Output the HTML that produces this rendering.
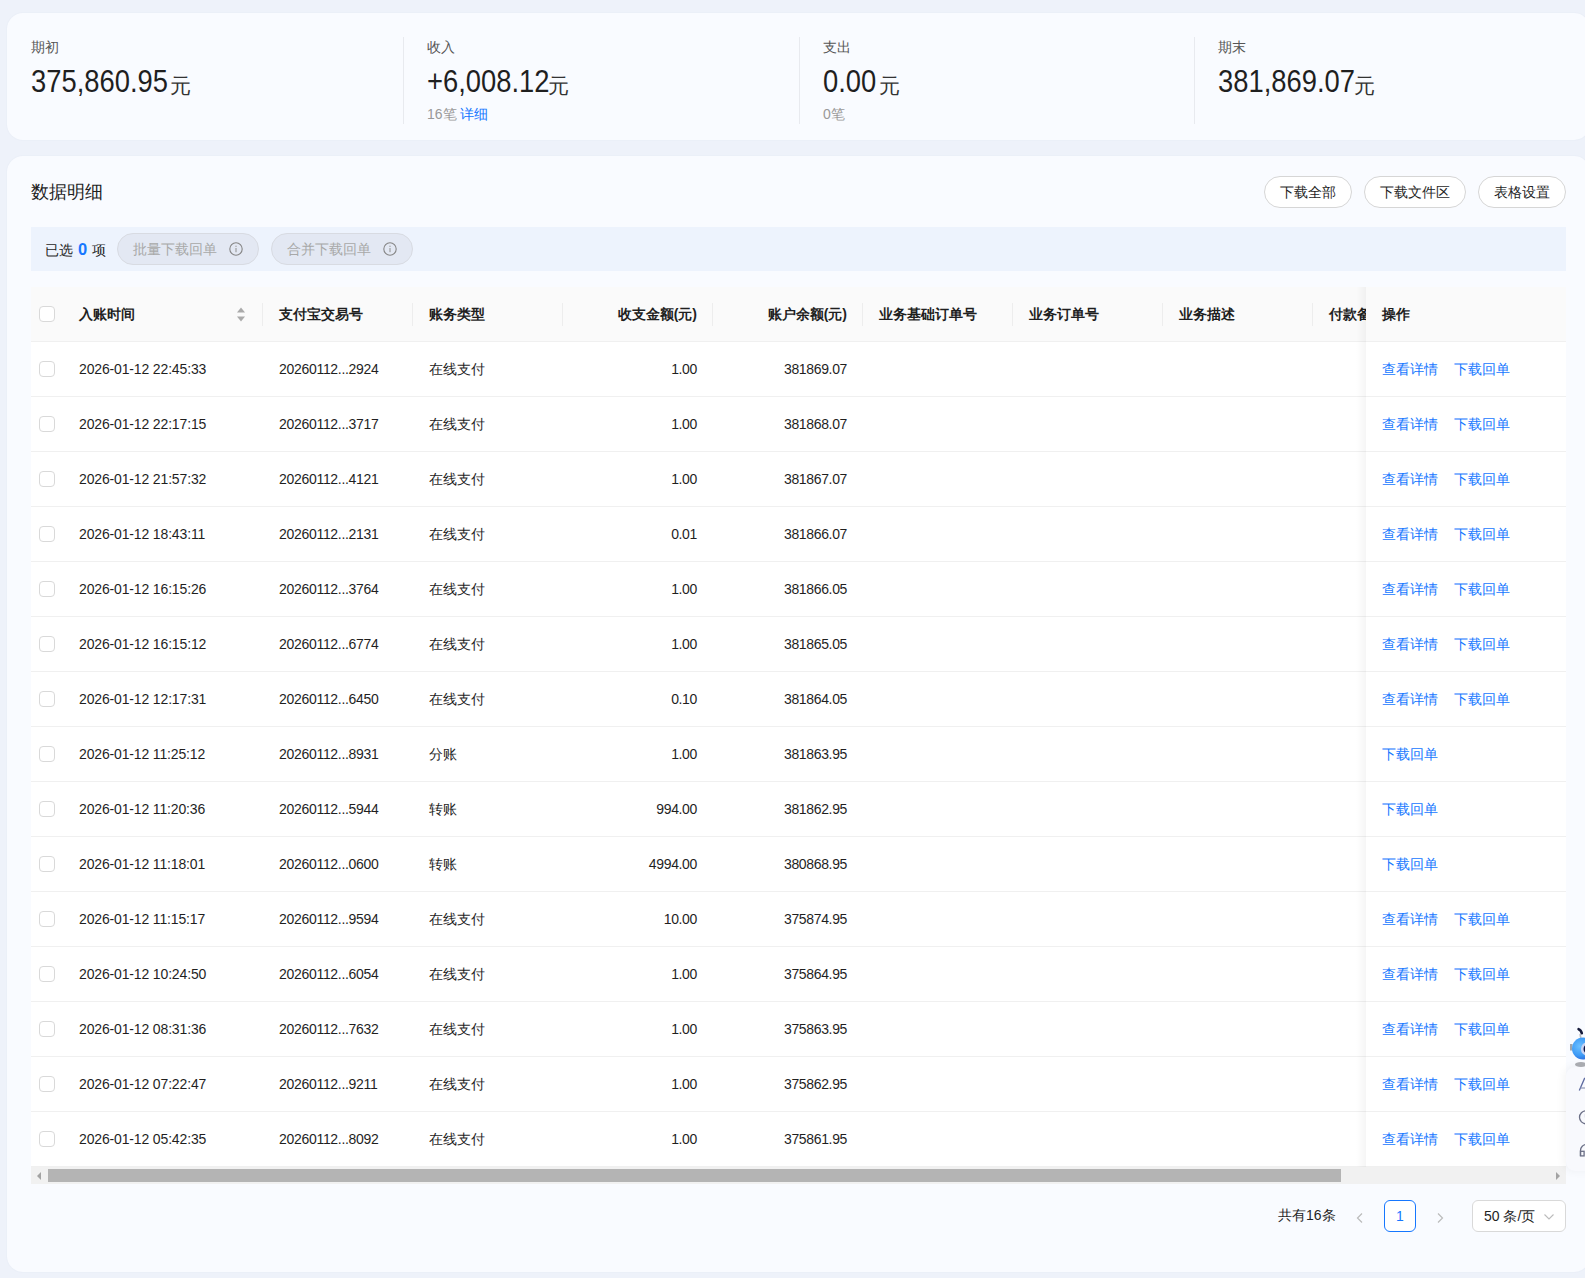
<!DOCTYPE html><html><head><meta charset="utf-8"><style>*{margin:0;padding:0;box-sizing:border-box}
html,body{width:1585px;height:1278px;overflow:hidden}
body{background:#eef2fa;font-family:"Liberation Sans",sans-serif;color:#1f1f1f;position:relative;font-size:14px}
.card1{position:absolute;left:7px;top:13px;width:1583px;height:127px;background:#f9fbff;border-radius:16px;box-shadow:0 0 2px rgba(60,80,120,0.05)}
.slab{position:absolute;top:38px;font-size:14px;color:#555;white-space:nowrap;line-height:18px}
.snum{position:absolute;top:64px;font-size:31px;color:#1f1f1f;white-space:nowrap;line-height:36px;transform:scaleX(0.883);transform-origin:0 0}
.syuan{position:absolute;top:74px;font-size:21px;color:#333;line-height:24px;white-space:nowrap}
.ssub{position:absolute;top:105px;font-size:14px;white-space:nowrap;line-height:18px}
.g{color:#999}
.lk{color:#1677ff}
.sdiv{position:absolute;top:37px;width:1px;height:87px;background:#e8eaef}
.card2{position:absolute;left:7px;top:156px;width:1583px;height:1116px;background:#f9fbff;border-radius:16px;box-shadow:0 0 2px rgba(60,80,120,0.05)}
.title{position:absolute;left:24px;top:24px;font-size:18px;line-height:24px;color:#1f1f1f}
.btn{position:absolute;top:20px;height:32px;border:1px solid #d6d6d6;border-radius:16px;background:#fff;font-size:14px;line-height:30.5px;text-align:center;color:#1f1f1f}
.selbar{position:absolute;left:24px;top:71px;width:1535px;height:44px;background:#edf3fd}
.seltxt{position:absolute;left:14px;top:13px;font-size:14px;line-height:18px;color:#1f1f1f}
.seltxt b{color:#1677ff;font-weight:bold;font-size:16.5px;margin:0 1px}
.dbtn{position:absolute;top:6px;height:32px;width:142px;border:1px solid #d8dbe2;border-radius:16px;background:#e3e8f3;color:#a8a8a8;font-size:14px;line-height:30px;padding-left:15px;white-space:nowrap}
.dbtn .ii{position:absolute;right:15px;top:8px}
.tbl{position:absolute;left:31px;top:287px;width:1535px;height:897px;background:#fff;overflow:hidden}
.thead{position:absolute;left:0;top:0;width:1535px;height:55px;background:#fafafa;border-bottom:1px solid #f0f0f0}
.th{position:absolute;top:18px;font-size:14px;line-height:18px;font-weight:bold;color:#1f1f1f;white-space:nowrap}
.th.r,.td.r{text-align:right}
.hdiv{position:absolute;top:16px;width:1px;height:23px;background:#ededed}
.sort{position:absolute;left:205px;top:19px}
.tr{position:absolute;left:0;width:1535px;height:55px;border-bottom:1px solid #f0f0f0}
.td{position:absolute;top:18px;font-size:14px;line-height:18px;color:#1f1f1f;white-space:nowrap}
.cb{position:absolute;width:16px;height:16px;border:1px solid #d9d9d9;border-radius:4px;background:#fff}
.fixcol{position:absolute;left:1335px;top:0;width:200px;height:880px;background:#fff}
.fhead{position:absolute;left:0;top:0;width:200px;height:55px;background:#fafafa;border-bottom:1px solid #f0f0f0}
.ftr{position:absolute;left:0;width:200px;height:55px;border-bottom:1px solid #f0f0f0;font-size:14px;line-height:18px}
.ftr .lk{position:absolute;top:18px;white-space:nowrap}
.a1{left:16px}.a2{left:88px}
.fshadow{position:absolute;left:1325px;top:0;width:10px;height:880px;background:linear-gradient(to right,rgba(0,0,0,0),rgba(0,0,0,0.04))}
.sb{position:absolute;left:0;top:880px;width:1535px;height:17px;background:#f1f1f1}
.thumb{position:absolute;left:17px;top:2px;height:13px;width:1293px;background:#b4b4b4}
.arl{position:absolute;left:5px;top:5px}
.arr{position:absolute;right:5px;top:5px}
.pg-total{position:absolute;left:1278px;top:1206px;font-size:14px;line-height:18px;color:#1f1f1f}
.pg-prev{position:absolute;left:1355px;top:1212px}
.pg-cur{position:absolute;left:1384px;top:1200px;width:32px;height:32px;border:1px solid #1677ff;border-radius:6px;color:#1677ff;text-align:center;line-height:30px;font-size:14px;background:#fff}
.pg-next{position:absolute;left:1435px;top:1212px}
.pg-sel{position:absolute;left:1472px;top:1200px;width:94px;height:32px;border:1px solid #d9d9d9;border-radius:6px;background:#fff;font-size:14px;line-height:30px;padding-left:11px;color:#1f1f1f}
.fw{position:absolute;left:1566px;top:1067px;width:40px;height:104px;background:#f8f9fd;border-radius:9px;box-shadow:-2px 0 10px rgba(0,0,0,0.05)}
.mascot{position:absolute;left:1566px;top:1020px}
.fwicons{position:absolute;left:1566px;top:1067px}
.dt{letter-spacing:-0.15px}.tn{letter-spacing:-0.3px}.am{letter-spacing:-0.35px}
</style></head><body>
<div class="card1"></div>
<div class="slab" style="left:31px">期初</div>
<div class="snum" style="left:31px">375,860.95</div>
<div class="syuan" style="left:170px">元</div>
<div class="slab" style="left:427px">收入</div>
<div class="snum" style="left:427px">+6,008.12</div>
<div class="syuan" style="left:548px">元</div>
<div class="ssub" style="left:427px"><span class="g">16笔</span> <span class="lk">详细</span></div>
<div class="sdiv" style="left:403px"></div>
<div class="slab" style="left:823px">支出</div>
<div class="snum" style="left:823px">0.00</div>
<div class="syuan" style="left:879px">元</div>
<div class="ssub" style="left:823px"><span class="g">0笔</span></div>
<div class="sdiv" style="left:799px"></div>
<div class="slab" style="left:1218px">期末</div>
<div class="snum" style="left:1218px">381,869.07</div>
<div class="syuan" style="left:1354px">元</div>
<div class="sdiv" style="left:1194px"></div>
<div class="card2">
<div class="title">数据明细</div>
<div class="btn" style="left:1257px;width:88px">下载全部</div>
<div class="btn" style="left:1357px;width:102px">下载文件区</div>
<div class="btn" style="left:1471px;width:88px">表格设置</div>
<div class="selbar"><span class="seltxt">已选 <b>0</b> 项</span><span class="dbtn" style="left:86px">批量下载回单<svg class="ii" width="14" height="14" viewBox="0 0 14 14"><circle cx="7" cy="7" r="6.2" fill="none" stroke="#858585" stroke-width="1.1"/><rect x="6.45" y="6" width="1.1" height="4.2" fill="#999"/><rect x="6.45" y="3.7" width="1.1" height="1.2" fill="#999"/></svg></span><span class="dbtn" style="left:240px">合并下载回单<svg class="ii" width="14" height="14" viewBox="0 0 14 14"><circle cx="7" cy="7" r="6.2" fill="none" stroke="#858585" stroke-width="1.1"/><rect x="6.45" y="6" width="1.1" height="4.2" fill="#999"/><rect x="6.45" y="3.7" width="1.1" height="1.2" fill="#999"/></svg></span></div>
</div>
<div class="tbl">
<div class="thead">
<span class="cb" style="left:8px;top:19px"></span>
<div class="th" style="left:48px">入账时间</div>
<div class="th" style="left:248px">支付宝交易号</div>
<div class="th" style="left:398px">账务类型</div>
<div class="th r" style="left:532px;width:134px">收支金额(元)</div>
<div class="th r" style="left:682px;width:134px">账户余额(元)</div>
<div class="th" style="left:848px">业务基础订单号</div>
<div class="th" style="left:998px">业务订单号</div>
<div class="th" style="left:1148px">业务描述</div>
<div class="th" style="left:1298px">付款备注</div>
<div class="hdiv" style="left:231px"></div>
<div class="hdiv" style="left:381px"></div>
<div class="hdiv" style="left:531px"></div>
<div class="hdiv" style="left:681px"></div>
<div class="hdiv" style="left:831px"></div>
<div class="hdiv" style="left:981px"></div>
<div class="hdiv" style="left:1131px"></div>
<div class="hdiv" style="left:1281px"></div>
<div class="hdiv" style="left:1431px"></div>
<svg class="sort" width="10" height="16" viewBox="0 0 10 16"><path d="M5 1.5 L9 6.5 L1 6.5Z" fill="#aaa"/><path d="M5 15.5 L9 10.5 L1 10.5Z" fill="#aaa"/></svg>
</div>
<div class="tr" style="top:55px">
<span class="cb" style="left:8px;top:19px"></span>
<div class="td dt" style="left:48px">2026-01-12 22:45:33</div>
<div class="td tn" style="left:248px">20260112...2924</div>
<div class="td " style="left:398px">在线支付</div>
<div class="td r am" style="left:532px;width:134px">1.00</div>
<div class="td r am" style="left:682px;width:134px">381869.07</div>
</div>
<div class="tr" style="top:110px">
<span class="cb" style="left:8px;top:19px"></span>
<div class="td dt" style="left:48px">2026-01-12 22:17:15</div>
<div class="td tn" style="left:248px">20260112...3717</div>
<div class="td " style="left:398px">在线支付</div>
<div class="td r am" style="left:532px;width:134px">1.00</div>
<div class="td r am" style="left:682px;width:134px">381868.07</div>
</div>
<div class="tr" style="top:165px">
<span class="cb" style="left:8px;top:19px"></span>
<div class="td dt" style="left:48px">2026-01-12 21:57:32</div>
<div class="td tn" style="left:248px">20260112...4121</div>
<div class="td " style="left:398px">在线支付</div>
<div class="td r am" style="left:532px;width:134px">1.00</div>
<div class="td r am" style="left:682px;width:134px">381867.07</div>
</div>
<div class="tr" style="top:220px">
<span class="cb" style="left:8px;top:19px"></span>
<div class="td dt" style="left:48px">2026-01-12 18:43:11</div>
<div class="td tn" style="left:248px">20260112...2131</div>
<div class="td " style="left:398px">在线支付</div>
<div class="td r am" style="left:532px;width:134px">0.01</div>
<div class="td r am" style="left:682px;width:134px">381866.07</div>
</div>
<div class="tr" style="top:275px">
<span class="cb" style="left:8px;top:19px"></span>
<div class="td dt" style="left:48px">2026-01-12 16:15:26</div>
<div class="td tn" style="left:248px">20260112...3764</div>
<div class="td " style="left:398px">在线支付</div>
<div class="td r am" style="left:532px;width:134px">1.00</div>
<div class="td r am" style="left:682px;width:134px">381866.05</div>
</div>
<div class="tr" style="top:330px">
<span class="cb" style="left:8px;top:19px"></span>
<div class="td dt" style="left:48px">2026-01-12 16:15:12</div>
<div class="td tn" style="left:248px">20260112...6774</div>
<div class="td " style="left:398px">在线支付</div>
<div class="td r am" style="left:532px;width:134px">1.00</div>
<div class="td r am" style="left:682px;width:134px">381865.05</div>
</div>
<div class="tr" style="top:385px">
<span class="cb" style="left:8px;top:19px"></span>
<div class="td dt" style="left:48px">2026-01-12 12:17:31</div>
<div class="td tn" style="left:248px">20260112...6450</div>
<div class="td " style="left:398px">在线支付</div>
<div class="td r am" style="left:532px;width:134px">0.10</div>
<div class="td r am" style="left:682px;width:134px">381864.05</div>
</div>
<div class="tr" style="top:440px">
<span class="cb" style="left:8px;top:19px"></span>
<div class="td dt" style="left:48px">2026-01-12 11:25:12</div>
<div class="td tn" style="left:248px">20260112...8931</div>
<div class="td " style="left:398px">分账</div>
<div class="td r am" style="left:532px;width:134px">1.00</div>
<div class="td r am" style="left:682px;width:134px">381863.95</div>
</div>
<div class="tr" style="top:495px">
<span class="cb" style="left:8px;top:19px"></span>
<div class="td dt" style="left:48px">2026-01-12 11:20:36</div>
<div class="td tn" style="left:248px">20260112...5944</div>
<div class="td " style="left:398px">转账</div>
<div class="td r am" style="left:532px;width:134px">994.00</div>
<div class="td r am" style="left:682px;width:134px">381862.95</div>
</div>
<div class="tr" style="top:550px">
<span class="cb" style="left:8px;top:19px"></span>
<div class="td dt" style="left:48px">2026-01-12 11:18:01</div>
<div class="td tn" style="left:248px">20260112...0600</div>
<div class="td " style="left:398px">转账</div>
<div class="td r am" style="left:532px;width:134px">4994.00</div>
<div class="td r am" style="left:682px;width:134px">380868.95</div>
</div>
<div class="tr" style="top:605px">
<span class="cb" style="left:8px;top:19px"></span>
<div class="td dt" style="left:48px">2026-01-12 11:15:17</div>
<div class="td tn" style="left:248px">20260112...9594</div>
<div class="td " style="left:398px">在线支付</div>
<div class="td r am" style="left:532px;width:134px">10.00</div>
<div class="td r am" style="left:682px;width:134px">375874.95</div>
</div>
<div class="tr" style="top:660px">
<span class="cb" style="left:8px;top:19px"></span>
<div class="td dt" style="left:48px">2026-01-12 10:24:50</div>
<div class="td tn" style="left:248px">20260112...6054</div>
<div class="td " style="left:398px">在线支付</div>
<div class="td r am" style="left:532px;width:134px">1.00</div>
<div class="td r am" style="left:682px;width:134px">375864.95</div>
</div>
<div class="tr" style="top:715px">
<span class="cb" style="left:8px;top:19px"></span>
<div class="td dt" style="left:48px">2026-01-12 08:31:36</div>
<div class="td tn" style="left:248px">20260112...7632</div>
<div class="td " style="left:398px">在线支付</div>
<div class="td r am" style="left:532px;width:134px">1.00</div>
<div class="td r am" style="left:682px;width:134px">375863.95</div>
</div>
<div class="tr" style="top:770px">
<span class="cb" style="left:8px;top:19px"></span>
<div class="td dt" style="left:48px">2026-01-12 07:22:47</div>
<div class="td tn" style="left:248px">20260112...9211</div>
<div class="td " style="left:398px">在线支付</div>
<div class="td r am" style="left:532px;width:134px">1.00</div>
<div class="td r am" style="left:682px;width:134px">375862.95</div>
</div>
<div class="tr" style="top:825px">
<span class="cb" style="left:8px;top:19px"></span>
<div class="td dt" style="left:48px">2026-01-12 05:42:35</div>
<div class="td tn" style="left:248px">20260112...8092</div>
<div class="td " style="left:398px">在线支付</div>
<div class="td r am" style="left:532px;width:134px">1.00</div>
<div class="td r am" style="left:682px;width:134px">375861.95</div>
</div>
<div class="fixcol">
<div class="fhead"><span class="th" style="left:16px">操作</span></div>
<div class="ftr" style="top:55px"><span class="lk a1">查看详情</span><span class="lk a2">下载回单</span></div>
<div class="ftr" style="top:110px"><span class="lk a1">查看详情</span><span class="lk a2">下载回单</span></div>
<div class="ftr" style="top:165px"><span class="lk a1">查看详情</span><span class="lk a2">下载回单</span></div>
<div class="ftr" style="top:220px"><span class="lk a1">查看详情</span><span class="lk a2">下载回单</span></div>
<div class="ftr" style="top:275px"><span class="lk a1">查看详情</span><span class="lk a2">下载回单</span></div>
<div class="ftr" style="top:330px"><span class="lk a1">查看详情</span><span class="lk a2">下载回单</span></div>
<div class="ftr" style="top:385px"><span class="lk a1">查看详情</span><span class="lk a2">下载回单</span></div>
<div class="ftr" style="top:440px"><span class="lk a1">下载回单</span></div>
<div class="ftr" style="top:495px"><span class="lk a1">下载回单</span></div>
<div class="ftr" style="top:550px"><span class="lk a1">下载回单</span></div>
<div class="ftr" style="top:605px"><span class="lk a1">查看详情</span><span class="lk a2">下载回单</span></div>
<div class="ftr" style="top:660px"><span class="lk a1">查看详情</span><span class="lk a2">下载回单</span></div>
<div class="ftr" style="top:715px"><span class="lk a1">查看详情</span><span class="lk a2">下载回单</span></div>
<div class="ftr" style="top:770px"><span class="lk a1">查看详情</span><span class="lk a2">下载回单</span></div>
<div class="ftr" style="top:825px"><span class="lk a1">查看详情</span><span class="lk a2">下载回单</span></div>
</div>
<div class="fshadow"></div>
<div class="sb"><div class="thumb"></div><svg class="arl" width="6" height="8" viewBox="0 0 6 8"><path d="M5 0 L1 4 L5 8Z" fill="#a3a3a3"/></svg><svg class="arr" width="6" height="8" viewBox="0 0 6 8"><path d="M1 0 L5 4 L1 8Z" fill="#a3a3a3"/></svg></div>
</div>
<div class="pg-total">共有16条</div>
<svg class="pg-prev" width="10" height="12" viewBox="0 0 10 12"><path d="M7 1.5 L2.5 6 L7 10.5" fill="none" stroke="#bbb" stroke-width="1.2"/></svg>
<div class="pg-cur">1</div>
<svg class="pg-next" width="10" height="12" viewBox="0 0 10 12"><path d="M3 1.5 L7.5 6 L3 10.5" fill="none" stroke="#bbb" stroke-width="1.2"/></svg>
<div class="pg-sel">50 条/页<svg width="12" height="8" viewBox="0 0 12 8" style="position:absolute;left:70px;top:12px"><path d="M1.5 1.5 L6 6 L10.5 1.5" fill="none" stroke="#bbb" stroke-width="1.1"/></svg></div>
<div class="fw"></div>
<svg class="fwicons" width="19" height="104" viewBox="0 0 19 104">
<path d="M13.3 23.5 L18.5 11.5 L19 11.5" fill="none" stroke="#5d6aa0" stroke-width="1.3"/>
<path d="M14.2 21 L19 21" fill="none" stroke="#8890b0" stroke-width="1.1"/>
<circle cx="20" cy="50.3" r="6.5" fill="none" stroke="#6b6f86" stroke-width="1.3"/>
<path d="M19.5 47 L19.5 50.5" fill="none" stroke="#6b6f86" stroke-width="1.2"/>
<path d="M20.5 77.5 A6 6 0 0 0 14.5 83.5 L14.5 89" fill="none" stroke="#6b6f86" stroke-width="1.3"/>
<rect x="14.5" y="84.3" width="3.6" height="4.6" fill="none" stroke="#6b6f86" stroke-width="1.3"/>
</svg>
<svg class="mascot" width="19" height="50" viewBox="0 0 19 50">
<defs><radialGradient id="mg" cx="0.35" cy="0.4" r="0.7"><stop offset="0" stop-color="#6cc0ff"/><stop offset="0.6" stop-color="#3d9af5"/><stop offset="1" stop-color="#2a62d8"/></radialGradient></defs>
<path d="M14 14 L15.2 20" stroke="#b8bcc4" stroke-width="1.6"/>
<path d="M12.6 9.2 Q15 10 15.8 13.2" fill="none" stroke="#151a3a" stroke-width="2.6" stroke-linecap="round"/>
<rect x="4" y="24" width="2.5" height="6.5" fill="#a0a4aa"/>
<ellipse cx="15" cy="44.5" rx="6" ry="2.4" fill="#a9abb0"/>
<circle cx="17" cy="28.5" r="11" fill="url(#mg)"/>
<circle cx="21.5" cy="29" r="6.6" fill="#c9d3f2"/>
<circle cx="22.5" cy="29" r="5" fill="#0c1140"/>
</svg>
</body></html>
